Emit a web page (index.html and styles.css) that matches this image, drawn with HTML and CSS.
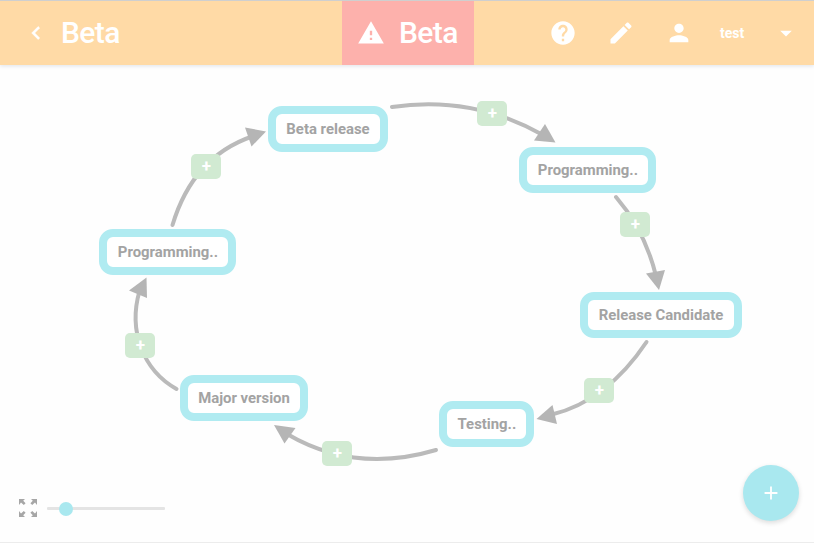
FILE: index.html
```html
<!DOCTYPE html>
<html lang="en">
<head>
<meta charset="utf-8">
<title>Beta</title>
<link rel="stylesheet" href="styles.css">
</head>
<body>
<header class="toolbar">
  <div class="brand">
    <svg class="icon back" viewBox="0 0 24 24"><path d="M15.41 7.41 14 6l-6 6 6 6 1.41-1.41L10.83 12z"/></svg>
    <h1 class="title">Beta</h1>
  </div>
  <div class="notice">
    <svg class="icon warning" viewBox="0 0 24 24"><path d="M1 21h22L12 2 1 21zm12-3h-2v-2h2v2zm0-4h-2v-4h2v4z"/></svg>
    <span class="title">Beta</span>
  </div>
  <nav class="actions">
    <svg class="icon help" viewBox="0 0 24 24"><path d="M12 2C6.48 2 2 6.48 2 12s4.48 10 10 10 10-4.480 10-10S17.520 2 12 2zm1 17h-2v-2h2v2zm2.070-7.750-.9.920C13.450 12.900 13 13.500 13 15h-2v-.5c0-1.100.45-2.100 1.170-2.830l1.240-1.260c.37-.36.59-.86.59-1.410 0-1.100-.9-2-2-2s-2 .9-2 2H8c0-2.210 1.790-4 4-4s4 1.790 4 4c0 .88-.36 1.680-.93 2.250z"/></svg>
    <svg class="icon edit" viewBox="0 0 24 24"><path d="M3 17.250V21h3.750L17.810 9.940l-3.750-3.750L3 17.250zM20.710 7.040c.39-.39.39-1.020 0-1.410l-2.340-2.340c-.39-.39-1.020-.39-1.410 0l-1.830 1.830 3.750 3.750 1.830-1.830z"/></svg>
    <svg class="icon person" viewBox="0 0 24 24"><path d="M12 12c2.210 0 4-1.790 4-4s-1.790-4-4-4-4 1.790-4 4 1.790 4 4 4zm0 2c-2.670 0-8 1.340-8 4v2h16v-2c0-2.660-5.330-4-8-4z"/></svg>
    <span class="user">test</span>
    <svg class="icon caret" viewBox="0 0 24 24"><path d="M7 10l5 5 5-5z"/></svg>
  </nav>
</header>
<main class="canvas">
  <svg class="edges" viewBox="0 65 814 478">
    <g class="lines">
      <path d="M392 107Q472 95 543 135"/>
      <path d="M616 197C634 218 648 243 656 276"/>
      <path d="M646.500 342Q607 401 552 414.500"/>
      <path d="M436 450Q355 474 287 434"/>
      <path d="M176.500 389C143 370 128 331 139.500 291"/>
      <path d="M172.500 225Q193 157 252 136.500"/>
    </g>
    <g class="heads">
      <path d="M555.500 142.500 545 124 534 140.500z"/>
      <path d="M659 290 646 273.500 665 270z"/>
      <path d="M536.500 419 552.500 405 557 424z"/>
      <path d="M274 425 295.500 428 284.500 443.500z"/>
      <path d="M146.500 277.500 129 290.500 147 298z"/>
      <path d="M266 131.500 245 127.500 251.500 146.500z"/>
    </g>
  </svg>
  <div class="node beta">Beta release</div>
  <div class="node prog-right">Programming..</div>
  <div class="node candidate">Release Candidate</div>
  <div class="node testing">Testing..</div>
  <div class="node major">Major version</div>
  <div class="node prog-left">Programming..</div>
  <button class="add a1">+</button>
  <button class="add a2">+</button>
  <button class="add a3">+</button>
  <button class="add a4">+</button>
  <button class="add a5">+</button>
  <button class="add a6">+</button>
  <div class="zoom">
    <svg class="expand" viewBox="0 0 18 18"><path d="M0 0h6L4.200 1.800 6.600 4.200 4.800 6 2 3.500 0 6zM18 0v6l-2-2.500L13.200 6l-1.800-1.800 2.400-2.400L12 0zM0 18v-6l2 2.500L4.800 12l1.800 1.800-2.400 2.400L6 18zM18 18h-6l1.800-1.800-2.400-2.400 1.800-1.800 2.800 2.500L18 12z"/></svg>
    <div class="track"><span class="thumb"></span></div>
  </div>
  <button class="fab"><svg viewBox="0 0 24 24"><path d="M19 13h-6v6h-2v-6H5v-2h6V5h2v6h6z"/></svg></button>
</main>
</body>
</html>
```
FILE: styles.css
```css
* { box-sizing: border-box; }

body {
  margin: 0;
  height: 543px;
  overflow: hidden;
  display: flex;
  flex-direction: column;
  background: #fefefe;
  font-family: Roboto, "Liberation Sans", sans-serif;
}

.toolbar {
  flex: none;
  height: 65px;
  display: grid;
  grid-template-columns: 342px 132px 1fr;
  background: #ffdaa6;
  border-top: 1px solid #cfcfcf;
  box-shadow: 0 1px 4px #dfe2e8;
  color: #fff;
  z-index: 1;
}

.brand, .notice, .actions { display: flex; align-items: center; }
.brand { padding-left: 23px; }
.notice { padding-left: 15px; background: #fdb1ac; }
.actions { padding-left: 75px; }

.icon { flex: none; width: 28px; height: 28px; fill: currentColor; }
.back { width: 26px; height: 26px; margin-right: 12px; stroke: currentColor; stroke-width: .5; }
.title { margin: 0; font-size: 30px; line-height: 36px; font-weight: 500; letter-spacing: -.6px; }
.warning { margin-right: 14px; }
.edit { margin-left: 30px; }
.person { margin-left: 30px; }
.user { margin-left: 27px; width: 26px; font-size: 14px; font-weight: 700; }
.caret { margin-left: 26px; }

.canvas { position: relative; flex: 1; border-bottom: 1px solid #ececec; }
.edges { position: absolute; left: 0; top: 0; width: 814px; height: 478px; }
.lines { fill: none; stroke: #bababa; stroke-width: 4; stroke-linecap: round; }
.heads { fill: #b5b5b5; }

.node {
  position: absolute;
  height: 46px;
  border: 8px solid #b0ebf1;
  border-radius: 14px;
  background: #fff;
  color: #a3a3a3;
  font-size: 14.900px;
  font-weight: 700;
  line-height: 31px;
  text-align: center;
  white-space: nowrap;
}
.beta { left: 268px; top: 41px; width: 120px; }
.prog-right { left: 519.400px; top: 82px; width: 137px; }
.candidate { left: 580px; top: 227px; width: 162px; }
.testing { left: 439.400px; top: 336px; width: 95px; }
.major { left: 180px; top: 310px; width: 128px; }
.prog-left { left: 99.400px; top: 164px; width: 137px; }

.add {
  position: absolute;
  width: 30px;
  height: 25px;
  padding: 0;
  border: 0;
  border-radius: 5px;
  background: #d1ead2;
  color: #fff;
  font: 700 17px/25px Roboto, sans-serif;
  text-align: center;
}
.a1 { left: 477.400px; top: 36px; }
.a2 { left: 620.400px; top: 147px; }
.a3 { left: 584.400px; top: 313px; }
.a4 { left: 322.400px; top: 376px; }
.a5 { left: 125.400px; top: 268px; }
.a6 { left: 191.400px; top: 89px; }

.zoom { position: absolute; left: 19px; bottom: 25px; display: flex; align-items: center; gap: 10px; }
.expand { width: 18px; height: 18px; fill: #a6a6a6; }
.track { position: relative; width: 118px; height: 3px; border-radius: 1px; background: #e4e4e4; }
.thumb { position: absolute; left: 12px; top: -5px; width: 14px; height: 14px; border-radius: 50%; background: #a9e8ef; }

.fab {
  position: absolute;
  left: 743px;
  bottom: 21px;
  width: 56px;
  height: 56px;
  display: grid;
  place-items: center;
  padding: 0;
  border: 0;
  border-radius: 50%;
  background: #a9e8ef;
  box-shadow: 0 2px 5px #dcdcdc;
}
.fab svg { width: 22px; height: 22px; fill: #fff; }
```
